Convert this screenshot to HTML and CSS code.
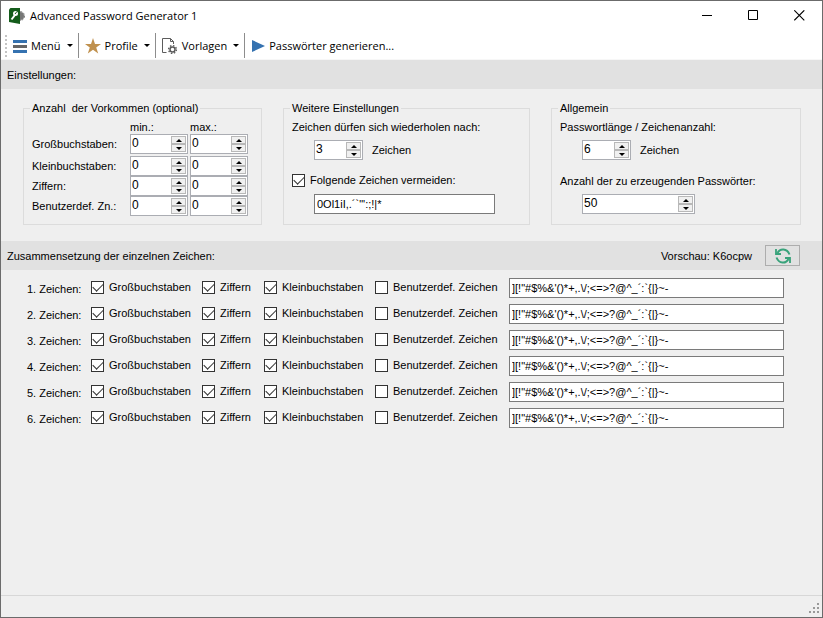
FILE: index.html
```html
<!DOCTYPE html>
<html lang="de">
<head>
<meta charset="utf-8">
<title>Advanced Password Generator 1</title>
<link rel="stylesheet" href="styles.css">
</head>
<body>
<div class="window">
  <header class="titlebar">
    <svg class="app-icon" viewBox="0 0 16 16" width="16" height="16"><circle cx="11" cy="8" r="4" fill="#777"/><circle cx="11" cy="8" r="4.500" fill="none" stroke="#777" stroke-dasharray="2 1"/><path d="M0 1.500 1.500 0H11V16L0 14Z" fill="#145c1b"/><path d="M2.500 11.500 6 7" stroke="#fff" stroke-width="2"/><circle cx="6.500" cy="5.500" r="2.500" fill="#fff"/><path d="M6 6 8 3.500" stroke="#145c1b"/></svg>
    <h1 class="title">Advanced Password Generator 1</h1>
    <button class="win-button" aria-label="Minimieren"><svg width="11" height="11"><path d="M0 5.500H10" stroke="#000"/></svg></button>
    <button class="win-button" aria-label="Maximieren"><svg width="11" height="11"><path d="M.5.5h9v9h-9z" fill="none" stroke="#000"/></svg></button>
    <button class="win-button" aria-label="Schließen"><svg width="11" height="11"><path d="M.3.3 10.300 10.300M10.300.3.3 10.300" stroke="#000" stroke-width="1.100"/></svg></button>
  </header>
  <nav class="toolbar">
    <button class="tool"><svg width="14" height="14"><path d="M0 2.500H14M0 12.500H14" stroke="#3572b0" stroke-width="3"/><path d="M0 7.500H14" stroke="#666" stroke-width="3"/></svg>Menü<span class="caret"></span></button>
    <button class="tool"><svg width="16" height="16"><path d="M8 0 10 6H16L11.200 9.500 13.200 15.500 8 11.800 2.800 15.500 4.800 9.500 0 6H6Z" fill="#c0914e"/></svg>Profile<span class="caret"></span></button>
    <button class="tool"><svg width="16" height="16" fill="none" stroke="#5c5c5c"><path d="M4.500 14.500H.5V.5H8.500L11.500 3.500V6M8.500.5V3.500H11.500"/><circle cx="10.500" cy="11.500" r="2.500" stroke-width="1.500"/><circle cx="10.500" cy="11.500" r="3.900" stroke-width="1.400" stroke-dasharray="1.500 1.560"/></svg>Vorlagen<span class="caret"></span></button>
    <button class="tool"><svg width="13" height="14"><path d="M0 1V13L13 7Z" fill="#3572b0"/></svg>Passwörter generieren...</button>
  </nav>
  <h2 class="band">Einstellungen:</h2>
  <main class="settings">
    <fieldset class="group">
      <legend>Anzahl  der Vorkommen (optional)</legend>
      <div class="counts" id="counts"><span></span><span>min.:</span><span>max.:</span></div>
    </fieldset>
    <fieldset class="group">
      <legend>Weitere Einstellungen</legend>
      <label for="repeat">Zeichen dürfen sich wiederholen nach:</label>
      <div class="indent line"><span class="spin small"><input id="repeat" value="3"><button aria-label="Mehr"></button><button aria-label="Weniger"></button></span><span>Zeichen</span></div>
      <label class="check second"><input type="checkbox" checked>Folgende Zeichen vermeiden:</label>
      <div class="indent"><input class="text avoid" aria-label="Zu vermeidende Zeichen" value="0Ol1iI,.´`&quot;':;!|*"></div>
    </fieldset>
    <fieldset class="group">
      <legend>Allgemein</legend>
      <label for="length">Passwortlänge / Zeichenanzahl:</label>
      <div class="indent line"><span class="spin small"><input id="length" value="6"><button aria-label="Mehr"></button><button aria-label="Weniger"></button></span><span>Zeichen</span></div>
      <label class="second" for="amount">Anzahl der zu erzeugenden Passwörter:</label>
      <div class="indent"><span class="spin wide"><input id="amount" value="50"><button aria-label="Mehr"></button><button aria-label="Weniger"></button></span></div>
    </fieldset>
  </main>
  <div class="band">
    <h2>Zusammensetzung der einzelnen Zeichen:</h2>
    <span>Vorschau: K6ocpw</span>
    <button class="refresh" aria-label="Aktualisieren"><svg width="16" height="16" fill="none" stroke="#39a37b" stroke-width="2"><path d="M2.500 5C5 0 12 0 14.500 6.500M1.500 9.500C4 16 11 16 13.500 11"/><path d="M1 1V6H6M15 15V10H10" stroke-width="1.800"/></svg></button>
  </div>
  <section class="rows" id="rows"></section>
  <footer class="statusbar"><svg width="11" height="11" fill="#999"><path d="M8 0h2v2h-2zM4 4h2v2h-2zM8 4h2v2h-2zM0 8h2v2h-2zM4 8h2v2h-2zM8 8h2v2h-2z"/></svg></footer>
</div>
<script src="script.js"></script>
</body>
</html>
```
FILE: styles.css
```css
* { box-sizing: border-box; }
body {
  margin: 0;
  font: 11px/14px "Liberation Sans", Arial, sans-serif;
  color: #000;
}
button, input { font: inherit; color: inherit; margin: 0; padding: 0; border-radius: 0; }
.window {
  display: flex;
  flex-direction: column;
  min-height: 100vh;
  border: 1px solid #6b6b6b;
  background: #efefef;
}
.titlebar {
  display: flex;
  align-items: center;
  height: 29px;
  padding-left: 8px;
  background: #fff;
}
.title {
  flex: 1;
  margin: 0 0 0 5px;
  font: 11px/16px "Open Sans", "Segoe UI", sans-serif;
}
.win-button {
  display: grid;
  place-items: center;
  width: 46px;
  height: 28px;
  border: 0;
  background: none;
}
.toolbar {
  display: flex;
  align-items: center;
  height: 30px;
  padding: 2px 0 0 4px;
  background: #fff;
  border-bottom: 1px solid #f7f7f7;
}
.toolbar::before {
  content: "";
  height: 22px;
  border-left: 2px dotted #c4c4c4;
}
.tool {
  display: flex;
  align-items: center;
  gap: 4px;
  height: 25px;
  padding: 0 5px 0 6px;
  border: 0;
  border-right: 1px solid #8d8d8d;
  background: none;
  font: 11px/16px "Open Sans", "Segoe UI", sans-serif;
}
.tool:last-child { border-right: 0; padding-left: 7px; }
.caret {
  margin-left: 2px;
  border: 3px solid transparent;
  border-top-color: #000;
  border-bottom: 0;
}
.band {
  display: flex;
  align-items: center;
  height: 29px;
  margin: 0;
  padding: 0 22px 0 6px;
  background: #e1e1e1;
  font-size: 11px;
  font-weight: normal;
}
.band h2 { flex: 1; margin: 0; font: inherit; }
.refresh {
  display: grid;
  place-items: center;
  width: 35px;
  height: 21px;
  margin-left: 13px;
  border: 1px solid #adadad;
  background: #e1e1e1;
}
.settings {
  display: grid;
  grid-template-columns: 239fr 247fr 250fr;
  gap: 21px;
  padding: 12px 21px 16px 22px;
}
.group {
  min-width: 0;
  margin: 0;
  padding: 5px 8px 8px;
  border: 1px solid #dcdcdc;
}
legend { padding: 0 2px; margin-left: -2px; white-space: pre; }
.group > label { display: flex; }
.counts {
  display: grid;
  grid-template-columns: 1fr 58px 58px;
  grid-template-rows: 14px 22px 20px 20px 20px;
  column-gap: 2px;
  margin-right: 5px;
}
.counts label { line-height: 20px; }
.spin {
  display: grid;
  grid-template: 1fr 1fr / 1fr 15px;
  height: 20px;
  padding: 1px;
  border: 1px solid #abadb3;
  background: #fff;
}
.spin input {
  grid-row: 1 / 3;
  min-width: 0;
  width: 100%;
  padding-bottom: 2px;
  border: 0;
  background: none;
  font-size: 12px;
}
.spin button {
  display: grid;
  place-items: center;
  border: 1px solid #b8b8b8;
  background: #f0f0f0;
}
.spin button::before {
  content: "";
  border: 3px solid transparent;
  border-top: 0;
  border-bottom-color: #000;
}
.spin button:last-child::before { transform: rotate(180deg); }
.small { width: 49px; }
.wide { width: 113px; }
.indent { margin-left: 22px; }
.line { display: flex; align-items: center; gap: 9px; margin-top: 6px; }
.group > .second { margin: 14px 0 6px; }
.text {
  width: 100%;
  height: 20px;
  padding: 0 2px;
  border: 1px solid #7a7a7a;
  background: #fff;
}
.avoid { width: 181px; }
.check {
  display: flex;
  align-items: center;
  gap: 5px;
  padding-bottom: 1px;
  line-height: 13px;
}
.check input {
  appearance: none;
  display: grid;
  place-items: center;
  flex: none;
  width: 13px;
  height: 13px;
  border: 1px solid #333;
  background: #fff;
}
.check input:checked::before {
  content: "";
  width: 9px;
  height: 5px;
  margin-bottom: 3px;
  border: solid #333;
  border-width: 0 0 1px 1px;
  transform: rotate(-45deg);
}
.rows {
  display: grid;
  grid-template-columns: 64px 111px 62px 111px 134px 1fr;
  align-items: center;
  row-gap: 6px;
  padding: 8px 38px 8px 26px;
}
.number { padding-top: 2px; }
.statusbar {
  display: flex;
  align-items: flex-end;
  justify-content: flex-end;
  height: 22px;
  margin-top: auto;
  padding: 3px 2px;
  border-top: 1px solid #d7d7d7;
}
```
FILE: script.js
```js
const arrows = '<button aria-label="Mehr"></button><button aria-label="Weniger"></button>';
const counts = document.getElementById("counts");
["Großbuchstaben:", "Kleinbuchstaben:", "Ziffern:", "Benutzerdef. Zn.:"].forEach((name, i) => {
  counts.insertAdjacentHTML("beforeend",
    `<label for="min${i}">${name}</label>
     <span class="spin"><input id="min${i}" value="0">${arrows}</span>
     <span class="spin"><input aria-label="${name} max." value="0">${arrows}</span>`);
});

const rows = document.getElementById("rows");
for (let n = 1; n <= 6; n++) {
  rows.insertAdjacentHTML("beforeend",
    `<label class="number" for="chars${n}">${n}. Zeichen:</label>
     <label class="check"><input type="checkbox" checked>Großbuchstaben</label>
     <label class="check"><input type="checkbox" checked>Ziffern</label>
     <label class="check"><input type="checkbox" checked>Kleinbuchstaben</label>
     <label class="check"><input type="checkbox">Benutzerdef. Zeichen</label>
     <input class="text" id="chars${n}">`);
  document.getElementById(`chars${n}`).value = "][!\"#$%&'()*+,.\\/;<=>?@^_´:`{|}~-";
}
```
